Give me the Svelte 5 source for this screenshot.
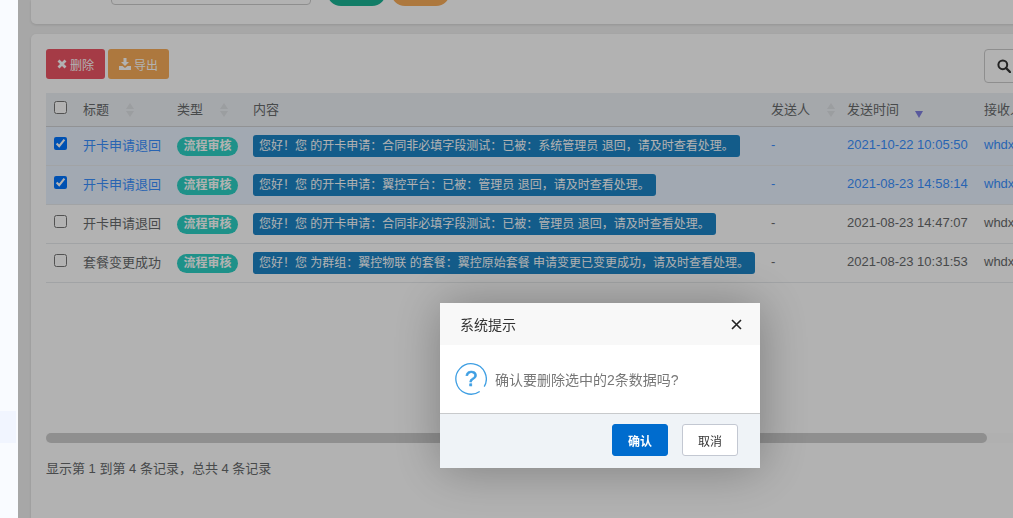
<script>
  const rows = [
    {
      title: '开卡申请退回',
      content: '您好！您 的开卡申请：合同非必填字段测试：已被：系统管理员 退回，请及时查看处理。',
      time: '2021-10-22 10:05:50',
      checked: true
    },
    {
      title: '开卡申请退回',
      content: '您好！您 的开卡申请：翼控平台：已被：管理员 退回，请及时查看处理。',
      time: '2021-08-23 14:58:14',
      checked: true
    },
    {
      title: '开卡申请退回',
      content: '您好！您 的开卡申请：合同非必填字段测试：已被：管理员 退回，请及时查看处理。',
      time: '2021-08-23 14:47:07',
      checked: false
    },
    {
      title: '套餐变更成功',
      content: '您好！您 为群组：翼控物联 的套餐：翼控原始套餐 申请变更已变更成功，请及时查看处理。',
      time: '2021-08-23 10:31:53',
      checked: false
    }
  ];
</script>

{#snippet sortIcon()}
  <svg class="sort" width="8" height="14" viewBox="0 0 8 14">
    <path d="M4 0 L8 6 H0 Z M0 8 H8 L4 14 Z" fill="#dfe2e6" />
  </svg>
{/snippet}

<div class="page">
  <aside class="sidebar">
    <div class="side-item"></div>
  </aside>

  <main class="main">
    <section class="card search-card">
      <div class="fake-input"></div>
      <div class="pill green"></div>
      <div class="pill orange"></div>
    </section>

    <section class="card list-card">
      <div class="toolbar">
        <div class="actions">
          <button class="btn danger">
            <svg width="10" height="10" viewBox="0 0 10 10">
              <path d="M1.5 1.5 L8.5 8.5 M8.5 1.5 L1.5 8.5" stroke="#fff" stroke-width="2.8" />
            </svg>
            删除
          </button>
          <button class="btn warning">
            <svg width="12" height="12" viewBox="0 0 12 12">
              <path d="M4.5 0 H7.5 V4 H10 L6 8 L2 4 H4.5 Z M0 8 H3.5 L6 10 L8.5 8 H12 V12 H0 Z" fill="#fff" />
            </svg>
            导出
          </button>
        </div>
        <button class="search-btn" aria-label="搜索">
          <svg width="14" height="14" viewBox="0 0 14 14">
            <circle cx="5.8" cy="5.8" r="4.4" fill="none" stroke="#333" stroke-width="2" />
            <path d="M9 9 L13 13" stroke="#333" stroke-width="2.4" stroke-linecap="round" />
          </svg>
        </button>
      </div>

      <div class="table-wrap">
        <table>
          <colgroup>
            <col class="c-check" />
            <col class="c-title" />
            <col class="c-type" />
            <col class="c-content" />
            <col class="c-sender" />
            <col class="c-time" />
            <col class="c-receiver" />
          </colgroup>
          <thead>
            <tr>
              <th><input type="checkbox" /></th>
              <th>标题{@render sortIcon()}</th>
              <th>类型{@render sortIcon()}</th>
              <th>内容</th>
              <th>发送人{@render sortIcon()}</th>
              <th>
                发送时间
                <svg class="sort desc" width="8" height="7" viewBox="0 0 8 7">
                  <path d="M0 0 H8 L4 7 Z" fill="#8080e0" />
                </svg>
              </th>
              <th>接收人</th>
            </tr>
          </thead>
          <tbody>
            {#each rows as row}
              <tr class:selected={row.checked}>
                <td class="check"><input type="checkbox" checked={row.checked} /></td>
                <td>{row.title}</td>
                <td class="flush"><span class="tag">流程审核</span></td>
                <td class="flush"><span class="label">{row.content}</span></td>
                <td>-</td>
                <td>{row.time}</td>
                <td>whdx</td>
              </tr>
            {/each}
          </tbody>
        </table>
      </div>

      <!-- headless chromium hides native scrollbars, so this one is drawn -->
      <div class="scrollbar"><div class="thumb"></div></div>

      <p class="summary">显示第 1 到第 4 条记录，总共 4 条记录</p>
    </section>
  </main>
</div>

<div class="overlay"></div>

<div class="dialog" role="dialog">
  <header class="dialog-head">
    <span>系统提示</span>
    <svg width="11" height="11" viewBox="0 0 11 11">
      <path d="M1 1 L10 10 M10 1 L1 10" stroke="#222" stroke-width="1.6" />
    </svg>
  </header>
  <div class="dialog-body">
    <span class="ask">
      <svg width="32" height="32" viewBox="0 0 32 32">
        <path d="M24.7 28.45 A15.2 15.2 0 1 1 29.2 23.6" fill="none" stroke="#3f9fe3" stroke-width="1.3" />
      </svg>
      <b>?</b>
    </span>
    <span class="ask-text">确认要删除选中的2条数据吗?</span>
  </div>
  <footer class="dialog-foot">
    <button class="dlg-btn ok">确认</button>
    <button class="dlg-btn cancel">取消</button>
  </footer>
</div>

<style>
  :global(body) {
    margin: 0;
    overflow: hidden;
    font-family: "Liberation Sans", "Noto Sans CJK SC", sans-serif;
    font-size: 13px;
    color: #676a6c;
  }

  .page {
    display: flex;
    width: 1013px;
    height: 518px;
    overflow: hidden;
    background: #f0f0f0;
  }

  .sidebar {
    flex: none;
    width: 18px;
    padding-top: 411px;
    box-sizing: border-box;
    background: #f9fbff;
  }

  .side-item {
    width: 16px;
    height: 32px;
    background: #f1f5ff;
  }

  .main {
    flex: none;
    width: 1030px;
    margin-left: 13px;
    display: flex;
    flex-direction: column;
    gap: 10px;
  }

  .card {
    background: #fff;
    border-radius: 5px;
    box-shadow: 0 1px 3px rgba(0, 0, 0, 0.12);
    box-sizing: border-box;
  }

  /* top card is scrolled mostly out of view, only its bottom edge shows */
  .search-card {
    flex: none;
    height: 24px;
    padding: 0 0 18px 80px;
    display: flex;
    align-items: flex-end;
    border-radius: 0 0 5px 5px;
  }

  .fake-input {
    flex: none;
    width: 200px;
    height: 34px;
    margin-bottom: 1px;
    box-sizing: border-box;
    border: 1px solid #ccc;
    border-radius: 4px;
  }

  .pill {
    flex: none;
    width: 59px;
    height: 34px;
    border-radius: 14px;
  }

  .green {
    margin-left: 16px;
    background: #1ab394;
  }

  .orange {
    margin-left: 5px;
    background: #f8ac59;
  }

  .list-card {
    flex: 1;
    min-height: 0;
    padding: 15px 0 0 15px;
    border-radius: 5px 5px 0 0;
  }

  .toolbar {
    display: flex;
    justify-content: space-between;
    align-items: flex-start;
    width: 1000px;
    height: 34px;
    margin-bottom: 10px;
  }

  .actions {
    display: flex;
    gap: 3px;
  }

  .btn {
    display: flex;
    align-items: center;
    gap: 3px;
    height: 30px;
    padding: 0 11px;
    border: 0;
    border-radius: 3px;
    color: #fff;
    font: inherit;
    font-size: 12px;
  }

  .danger {
    width: 59px;
    background: #ed5565;
  }

  .warning {
    width: 61px;
    background: #f8ac59;
  }

  .search-btn {
    width: 62px;
    height: 34px;
    padding: 2px 0 0 12px;
    text-align: left;
    background: #fff;
    border: 1px solid #ccc;
    border-radius: 4px;
  }

  .table-wrap {
    width: 1000px;
    height: 340px;
    overflow: hidden;
  }

  .scrollbar {
    width: 1000px;
    height: 10px;
    background: #fcfcfc;
  }

  .thumb {
    width: 941px;
    height: 10px;
    background: #cdcdcd;
    border-radius: 5px;
  }

  table {
    width: 1063px;
    table-layout: fixed;
    border-collapse: separate;
    border-spacing: 0;
  }

  .c-check { width: 29px; }
  .c-title { width: 94px; }
  .c-type { width: 76px; }
  .c-content { width: 518px; }
  .c-sender { width: 76px; }
  .c-time { width: 137px; }
  .c-receiver { width: 133px; }

  th,
  td {
    padding: 0 8px;
    text-align: left;
    white-space: nowrap;
    box-sizing: border-box;
  }

  th {
    height: 34px;
    padding-bottom: 2px;
    font-weight: 400;
    background: #edf1f5;
    border-bottom: 1px solid #d0d2d4;
  }

  td {
    height: 39px;
    padding-bottom: 3px;
    border-bottom: 1px solid #e7eaec;
  }

  td.flush {
    padding-bottom: 0;
  }

  tr.selected td {
    background: #e8f3ff;
    color: #3a90ff;
  }

  input[type="checkbox"] {
    display: block;
    width: 13px;
    height: 13px;
    margin: 0 0 3px;
  }

  .sort {
    margin-left: 17px;
    vertical-align: -3px;
  }

  .sort.desc {
    margin-left: 12px;
    vertical-align: -4px;
  }

  .tag {
    display: inline-block;
    padding: 0 6.5px;
    line-height: 19px;
    font-size: 12px;
    font-weight: 700;
    color: #fff;
    background: #2bd0c4;
    border-radius: 10px;
  }

  .label {
    display: inline-block;
    padding: 0 6px;
    line-height: 22px;
    font-size: 12px;
    color: #fff;
    background: #1c84c6;
    border-radius: 3px;
  }

  .summary {
    margin: 15px 0 0;
    line-height: 22px;
  }

  .overlay {
    position: fixed;
    inset: 0 0 0 18px;
    background: rgba(0, 0, 0, 0.3);
  }

  .dialog {
    position: fixed;
    left: 440px;
    top: 303px;
    width: 320px;
    background: #fff;
    border-radius: 2px;
    box-shadow: 1px 1px 50px rgba(0, 0, 0, 0.3);
  }

  .dialog-head {
    display: flex;
    justify-content: space-between;
    align-items: center;
    height: 42px;
    padding: 0 18px 0 20px;
    background: #f8f8f8;
    font-size: 14px;
    color: #333;
  }

  .dialog-body {
    display: flex;
    align-items: center;
    gap: 8px;
    height: 68px;
    padding-left: 15px;
    border-bottom: 1px solid #c8cacc;
    font-size: 14px;
    color: #777;
  }

  .ask {
    position: relative;
    width: 32px;
    height: 32px;
  }

  .ask b {
    position: absolute;
    inset: 0;
    text-align: center;
    line-height: 32px;
    font-size: 22px;
    font-weight: 400;
    color: #3f9fe3;
    -webkit-text-stroke: 0.6px #3f9fe3;
  }

  .dialog-foot {
    display: flex;
    justify-content: flex-end;
    gap: 14px;
    height: 54px;
    padding: 10px 22px 0 0;
    box-sizing: border-box;
    background: #eff3f7;
  }

  .dlg-btn {
    width: 56px;
    height: 32px;
    padding: 0;
    border-radius: 3px;
    font: inherit;
    font-size: 12px;
  }

  .ok {
    border: 1px solid #006cce;
    background: #006cce;
    color: #fff;
    font-weight: 700;
  }

  .cancel {
    border: 1px solid #c3c8d2;
    background: #fff;
    color: #333;
  }
</style>
